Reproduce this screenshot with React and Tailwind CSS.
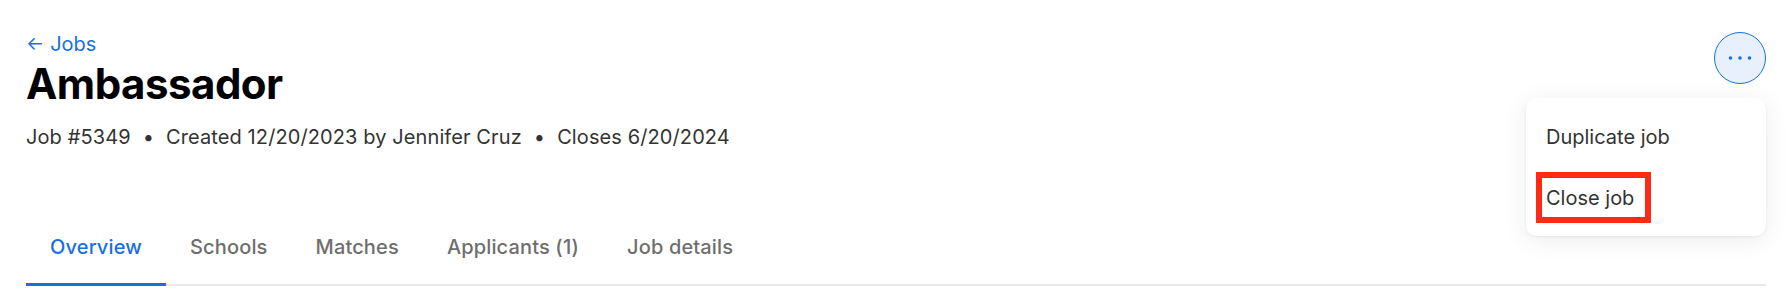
import React from 'react';

const tabs = ['Overview', 'Schools', 'Matches', 'Applicants (1)', 'Job details'];

const DotsIcon = () => (
  <svg width="26" height="6" viewBox="0 0 26 6" fill="#1a6fe0">
    <circle cx="3.5" cy="3" r="1.8" />
    <circle cx="13" cy="3" r="1.8" />
    <circle cx="22.5" cy="3" r="1.8" />
  </svg>
);

const App = () => {
  const active = 'Overview';

  return (
    <div className="w-full h-[300px] bg-white pl-[26px] pr-[20px] font-['Inter','Liberation_Sans',sans-serif] overflow-hidden">
      {/* Header */}
      <div className="flex justify-between items-start">
        <div className="pt-[30px]">
          <a href="#" className="flex items-center gap-[6px] text-[20px] leading-[28px] text-[#1a6fe0]">
            <span className="text-[19px]">←</span>
            <span>Jobs</span>
          </a>
          <h1 className="mt-[1px] text-[42px] leading-[50px] font-bold text-black tracking-[-0.5px]">
            Ambassador
          </h1>
          <div className="mt-[14px] flex items-center text-[20px] leading-[28px] text-[#333] tracking-[0.1px]">
            <span>Job #5349</span>
            <span className="mx-[12px] text-[20px]">•</span>
            <span>Created 12/20/2023 by Jennifer Cruz</span>
            <span className="mx-[12px] text-[20px]">•</span>
            <span>Closes 6/20/2024</span>
          </div>
        </div>

        <div className="relative pt-[32px]">
          <button className="w-[52px] h-[52px] rounded-full bg-[#e8f0fd] border border-[#1a6fe0] flex items-center justify-center">
            <DotsIcon />
          </button>

          {/* Dropdown menu */}
          <div className="absolute right-0 top-[98px] w-[240px] bg-white rounded-[10px] py-[8px] shadow-[0_4px_24px_rgba(0,0,0,0.08),0_1px_3px_rgba(0,0,0,0.06)] z-10">
            <div className="h-[61px] px-[20px] flex items-center text-[20px] text-[#333]">
              Duplicate job
            </div>
            <div className="relative h-[61px] px-[20px] flex items-center text-[20px] text-[#333]">
              Close job
              <div className="absolute left-[10px] top-[5px] w-[115px] h-[51px] border-[6px] border-[#ff2a14]" />
            </div>
          </div>
        </div>
      </div>

      {/* Tabs */}
      <div className="mt-[82px] flex border-b-2 border-[#e8e8e8]">
        {tabs.map((tab) => (
          <div
            key={tab}
            className={`px-6 pb-[22px] -mb-[2px] border-b-[3px] text-[20px] leading-[28px] font-medium tracking-[0.15px] ${
              tab === active ? 'border-[#1a6fe0] text-[#1a6fe0]' : 'border-transparent text-[#6e6e6e]'
            }`}
          >
            {tab}
          </div>
        ))}
      </div>
    </div>
  );
};

export default App;
